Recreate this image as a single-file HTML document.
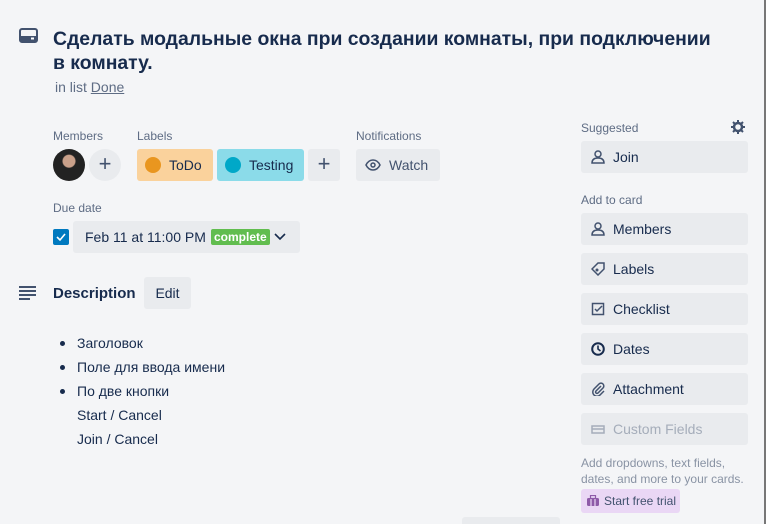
<!DOCTYPE html>
<html><head><meta charset="utf-8"><style>
*{margin:0;padding:0;box-sizing:border-box}
body{width:766px;height:524px;background:#f4f5f7;font-family:"Liberation Sans","Noto Sans CJK SC",sans-serif;color:#172b4d;position:relative;overflow:hidden}
.a{position:absolute}
.h{font-size:12px;color:#5e6c84}
.btn{position:absolute;background:#e9ebee;border-radius:3px}
.sb{position:absolute;left:581px;width:167px;height:32px;background:#e9ebee;border-radius:3px;font-size:14px;color:#172b4d;line-height:32px;padding-left:32px}
.sb svg{position:absolute;left:10px;top:9px}
.li{position:absolute;left:77px;font-size:14px;color:#172b4d}
.dot{position:absolute;left:60px;width:5px;height:5px;border-radius:50%;background:#172b4d}
</style></head><body>
<div class="a" style="right:0;top:0;width:2px;height:524px;background:#777"></div>
<svg class="a" style="left:19px;top:28px" width="20" height="16" viewBox="0 0 20 16"><rect x="1" y="1" width="17" height="13" rx="2" fill="none" stroke="#42526e" stroke-width="2"/><rect x="2" y="8" width="15" height="5" fill="#42526e"/><rect x="12" y="9.5" width="3" height="2" fill="#fff"/></svg>
<div class="a" style="left:53px;top:27px;font-size:19.4px;font-weight:bold;line-height:24px;white-space:nowrap;color:#172b4d">Сделать модальные окна при создании комнаты, при подключении<br>в комнату.</div>
<div class="a" style="left:55px;top:79px;font-size:14px;color:#5e6c84">in list <span style="text-decoration:underline">Done</span></div>

<div class="a h" style="left:53px;top:129px">Members</div>
<div class="a h" style="left:137px;top:129px">Labels</div>
<div class="a h" style="left:356px;top:129px">Notifications</div>
<div class="a" style="left:53px;top:149px;width:32px;height:32px;border-radius:50%;background:radial-gradient(circle at 50% 38%,#c9a08a 0 6px,#222 7px)"></div>
<div class="btn" style="left:89px;top:149px;width:32px;height:32px;border-radius:50%;font-size:22px;text-align:center;line-height:30px;color:#42526e">+</div>
<div class="a" style="left:137px;top:149px;width:76px;height:32px;background:#fad29c;border-radius:3px"><div class="a" style="left:8px;top:8px;width:16px;height:16px;border-radius:50%;background:#e9961f"></div><span class="a" style="left:32px;top:8px;font-size:14px">ToDo</span></div>
<div class="a" style="left:217px;top:149px;width:87px;height:32px;background:#8bdbe9;border-radius:3px"><div class="a" style="left:8px;top:8px;width:16px;height:16px;border-radius:50%;background:#00a8c8"></div><span class="a" style="left:32px;top:8px;font-size:14px">Testing</span></div>
<div class="btn" style="left:308px;top:149px;width:32px;height:32px;font-size:22px;text-align:center;line-height:30px;color:#42526e">+</div>
<div class="btn" style="left:356px;top:149px;width:84px;height:32px"><svg class="a" style="left:9px;top:10px" width="16" height="12" viewBox="0 0 16 12"><path d="M1 6C3 2 6 1 8 1s5 1 7 5c-2 4-5 5-7 5S3 10 1 6z" fill="none" stroke="#42526e" stroke-width="1.5"/><circle cx="8" cy="6" r="2" fill="none" stroke="#42526e" stroke-width="1.5"/></svg><span class="a" style="left:33px;top:8px;font-size:14px;color:#42526e">Watch</span></div>

<div class="a h" style="left:53px;top:201px">Due date</div>
<div class="a" style="left:53px;top:229px;width:16px;height:16px;background:#0079bf;border-radius:2px"><svg width="16" height="16"><path d="M4 8l3 3 5-6" fill="none" stroke="#fff" stroke-width="1.6"/></svg></div>
<div class="btn" style="left:73px;top:221px;width:227px;height:32px"><span class="a" style="left:12px;top:8px;font-size:14px;color:#172b4d">Feb 11 at 11:00 PM</span><span class="a" style="left:138px;top:8px;height:16px;line-height:16px;padding:0 3px;background:#61bd4f;color:#fff;font-size:12px;font-weight:bold;border-radius:2px">complete</span><svg class="a" style="left:201px;top:12px" width="12" height="8"><path d="M1 1l5 5 5-5" fill="none" stroke="#172b4d" stroke-width="1.6"/></svg></div>

<svg class="a" style="left:18px;top:285px" width="20" height="16"><path d="M1 2h17M1 6h17M1 10h17M1 14h11" stroke="#42526e" stroke-width="2"/></svg>
<div class="a" style="left:53px;top:285px;font-size:15px;font-weight:bold">Description</div>
<div class="btn" style="left:144px;top:277px;width:47px;height:32px;font-size:14px;line-height:32px;text-align:center">Edit</div>
<div class="dot" style="top:341px"></div><div class="li" style="top:335px">Заголовок</div>
<div class="dot" style="top:365px"></div><div class="li" style="top:359px">Поле для ввода имени</div>
<div class="dot" style="top:389px"></div><div class="li" style="top:383px">По две кнопки</div>
<div class="li" style="top:407px">Start / Cancel</div>
<div class="li" style="top:431px">Join / Cancel</div>
<div class="a" style="left:462px;top:517px;width:98px;height:7px;background:#e9ebee;border-radius:3px 3px 0 0"></div>

<div class="a h" style="left:581px;top:121px">Suggested</div>
<svg class="a" style="left:731px;top:120px" width="14" height="14" viewBox="0 0 14 14"><circle cx="7" cy="7" r="4" fill="none" stroke="#42526e" stroke-width="2.5"/><path d="M7 0v3M7 11v3M0 7h3M11 7h3M2 2l2 2M10 10l2 2M2 12l2-2M10 4l2-2" stroke="#42526e" stroke-width="2"/></svg>
<div class="sb" style="top:141px"><svg width="14" height="14"><circle cx="7" cy="4" r="3" fill="none" stroke="#42526e" stroke-width="1.5"/><path d="M1 13c0-4 3-5 6-5s6 1 6 5z" fill="none" stroke="#42526e" stroke-width="1.5"/></svg>Join</div>
<div class="a h" style="left:581px;top:193px">Add to card</div>
<div class="sb" style="top:213px"><svg width="14" height="14"><circle cx="7" cy="4" r="3" fill="none" stroke="#42526e" stroke-width="1.5"/><path d="M1 13c0-4 3-5 6-5s6 1 6 5z" fill="none" stroke="#42526e" stroke-width="1.5"/></svg>Members</div>
<div class="sb" style="top:253px"><svg width="14" height="14"><path d="M7 1h6v6l-6 6-6-6z" fill="none" stroke="#42526e" stroke-width="1.5"/><circle cx="6" cy="8" r="1.5" fill="#42526e"/></svg>Labels</div>
<div class="sb" style="top:293px"><svg width="14" height="14"><rect x="1.5" y="1.5" width="11" height="11" fill="none" stroke="#42526e" stroke-width="1.5"/><path d="M4 7l2 2 5-5" fill="none" stroke="#42526e" stroke-width="1.5"/></svg>Checklist</div>
<div class="sb" style="top:333px"><svg width="14" height="14"><circle cx="7" cy="7" r="5.8" fill="none" stroke="#172b4d" stroke-width="2"/><path d="M7 3.5V7l2.5 2" fill="none" stroke="#172b4d" stroke-width="1.6"/></svg>Dates</div>
<div class="sb" style="top:373px"><svg width="14" height="14"><path d="M10 4l-5 5a1.4 1.4 0 002 2l5-5a2.8 2.8 0 00-4-4l-5 5a4 4 0 006 6l4-4" fill="none" stroke="#42526e" stroke-width="1.5"/></svg>Attachment</div>
<div class="sb" style="top:413px;color:#a5adba"><svg width="14" height="14"><rect x="1" y="4" width="12" height="7" fill="none" stroke="#a5adba" stroke-width="1.5"/><path d="M1 7h12" stroke="#a5adba" stroke-width="1.5"/></svg>Custom Fields</div>
<div class="a" style="left:581px;top:455px;font-size:12px;line-height:16px;color:#8993a4;width:180px">Add dropdowns, text fields, dates, and more to your cards.</div>
<div class="a" style="left:581px;top:489px;width:99px;height:24px;background:#ead7f5;border-radius:3px;font-size:12px;line-height:24px;padding-left:23px;color:#42526e"><svg class="a" style="left:5px;top:6px" width="14" height="12"><rect x="1" y="3" width="12" height="8" rx="1.5" fill="#8e5aa8"/><rect x="4.5" y="0.5" width="5" height="3" fill="none" stroke="#8e5aa8" stroke-width="1.2"/><path d="M5 4v7M9 4v7" stroke="#ead7f5" stroke-width="1.2"/></svg>Start free trial</div>
</body></html>
